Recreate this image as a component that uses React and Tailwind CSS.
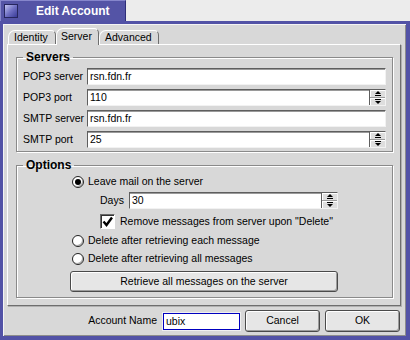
import React from 'react';

function Spinner() {
  return (
    <div className="w-[16px] flex flex-col border-l border-[#5e5e5e] bg-[#dedede]">
      <div className="flex-1 flex items-center justify-center border-b border-[#9a9a9a] shadow-[inset_1px_1px_0_#fff]">
        <svg width="8" height="5" viewBox="0 0 8 5">
          <path d="M4 0 L7 3 L1 3 Z" fill="#000" />
          <rect x="1" y="4" width="6" height="1" fill="#000" />
        </svg>
      </div>
      <div className="flex-1 flex items-center justify-center shadow-[inset_1px_1px_0_#fff]">
        <svg width="8" height="5" viewBox="0 0 8 5">
          <rect x="1" y="0" width="6" height="1" fill="#000" />
          <path d="M1 2 L7 2 L4 5 Z" fill="#000" />
        </svg>
      </div>
    </div>
  );
}

function Field({ value, spin, className = '' }) {
  return (
    <div
      className={`flex h-[17px] bg-white border border-t-[#5e5e5e] border-l-[#5e5e5e] border-b-[#f2f2f2] border-r-[#f2f2f2] shadow-[inset_0_1px_0_#9a9a9a] ${className}`}
    >
      <span className="flex-1 pl-[2px] leading-[15px]">{value}</span>
      {spin && <Spinner />}
    </div>
  );
}

function Radio({ checked, label }) {
  return (
    <div className="flex items-center h-[14px] pl-[49px]">
      <div className="w-[12px] h-[12px] rounded-full border border-[#222] bg-white shadow-[inset_-1px_-1px_0_#b0b0b0] flex items-center justify-center">
        {checked && <div className="w-[6px] h-[6px] rounded-full bg-black" />}
      </div>
      <span className="ml-[4px]">{label}</span>
    </div>
  );
}

function Button({ children, className = '' }) {
  return (
    <div
      className={`flex items-center justify-center border border-[#4a4a4a] rounded-[3px] bg-[#e6e6e6] shadow-[inset_1px_1px_0_#fff,inset_-1px_-1px_0_#9c9c9c] ${className}`}
    >
      {children}
    </div>
  );
}

function Tab({ label, active, className = '' }) {
  return (
    <div
      className={`flex items-center rounded-tl-[7px] rounded-tr-[5px] border-t border-l border-white border-r border-r-[#6e6e6e] bg-[#d8d8d8] ${
        active ? 'h-[17px] -mb-px relative z-10 pb-[1px]' : 'h-[14px]'
      } ${className}`}
    >
      {label}
    </div>
  );
}

function Group({ title, children, className = '' }) {
  return (
    <fieldset
      className={`border border-[#8a8a8a] shadow-[1px_1px_0_#fff,inset_1px_1px_0_#fff] px-[6px] ${className}`}
    >
      <legend className="px-[3px] text-[12px] font-bold leading-[14px]">{title}</legend>
      {children}
    </fieldset>
  );
}

export default function App() {
  return (
    <div className="w-[410px] h-[340px] bg-[#ececec] flex flex-col overflow-hidden text-black text-[10.5px] font-['Liberation_Sans',Arial,sans-serif]">
      {/* title tab */}
      <div className="h-[21px] w-[126px] shrink-0 flex items-center pl-[3px] bg-[#5454a6] border-t border-l border-[#8686cc] border-r border-r-[#2e2e78]">
        <div className="w-[14px] h-[14px] border border-[#26265e] bg-gradient-to-br from-[#c4c4f0] via-[#7070c4] to-[#3a3a96]" />
        <span className="ml-[18px] text-white font-bold text-[12px]">Edit Account</span>
      </div>

      {/* window */}
      <div className="flex-1 flex flex-col bg-[#d8d8d8] border-t-[3px] border-l-[3px] border-r-[4px] border-b-[4px] border-[#5252a6] shadow-[inset_1px_1px_0_#f4f4f4,inset_-1px_-1px_0_#8c8c8c] pt-[4px] pl-[4px] pr-[5px]">
        <div className="flex items-end h-[16px] ml-[1px]">
          <Tab label="Identity" className="w-[48px] pl-[5px]" />
          <Tab label="Server" active className="w-[43px] pl-[4px]" />
          <Tab label="Advanced" className="w-[60px] pl-[5px]" />
        </div>

        <div className="h-[262px] shrink-0 border-t border-l border-white border-r border-b border-r-[#6e6e6e] border-b-[#6e6e6e] shadow-[1px_1px_0_#b0b0b0] pt-[5px] pl-[8px] pr-[7px]">
          <Group title="Servers" className="pb-[3px]">
            <div className="flex flex-col gap-[4px] mt-[4px]">
              {[
                ['POP3 server', 'rsn.fdn.fr', false],
                ['POP3 port', '110', true],
                ['SMTP server', 'rsn.fdn.fr', false],
                ['SMTP port', '25', true],
              ].map(([label, value, spin]) => (
                <div key={label} className="flex items-center">
                  <span className="w-[64px] shrink-0">{label}</span>
                  <Field value={value} spin={spin} className="flex-1" />
                </div>
              ))}
            </div>
          </Group>

          <Group title="Options" className="mt-[6px] pb-[5px]">
            <div className="flex flex-col mt-[3px]">
              <Radio checked label="Leave mail on the server" />
              <div className="flex items-center mt-[3px] pl-[77px]">
                <span className="w-[29px]">Days</span>
                <Field value="30" spin className="w-[209px]" />
              </div>
              <div className="flex items-center mt-[5px] pl-[77px] h-[15px]">
                <div className="w-[15px] h-[15px] border border-t-[#6a6a6a] border-l-[#6a6a6a] border-b-white border-r-white bg-white shadow-[inset_1px_1px_0_#333] flex items-center justify-center">
                  <svg width="11" height="11" viewBox="0 0 11 11">
                    <path d="M1.5 5.5 L4.5 9 L10 1.5" fill="none" stroke="#000" strokeWidth="2.4" />
                  </svg>
                </div>
                <span className="ml-[5px]">Remove messages from server upon "Delete"</span>
              </div>
              <div className="mt-[5px]">
                <Radio label="Delete after retrieving each message" />
              </div>
              <div className="mt-[4px]">
                <Radio label="Delete after retrieving all messages" />
              </div>
              <div className="mt-[5px] pl-[47px]">
                <Button className="w-[268px] h-[21px]">Retrieve all messages on the server</Button>
              </div>
            </div>
          </Group>
        </div>

        <div className="flex-1 flex items-center justify-end mr-[1px]">
          <span>Account Name</span>
          <div className="ml-[6px] w-[77px] h-[17px] border border-[#0000c0] bg-white shadow-[0_0_0_1px_#f0f0f0] leading-[15px] pl-[2px]">
            ubix
          </div>
          <Button className="ml-[5px] w-[75px] h-[22px]">Cancel</Button>
          <Button className="ml-[5px] w-[75px] h-[22px]">OK</Button>
        </div>
      </div>
    </div>
  );
}
